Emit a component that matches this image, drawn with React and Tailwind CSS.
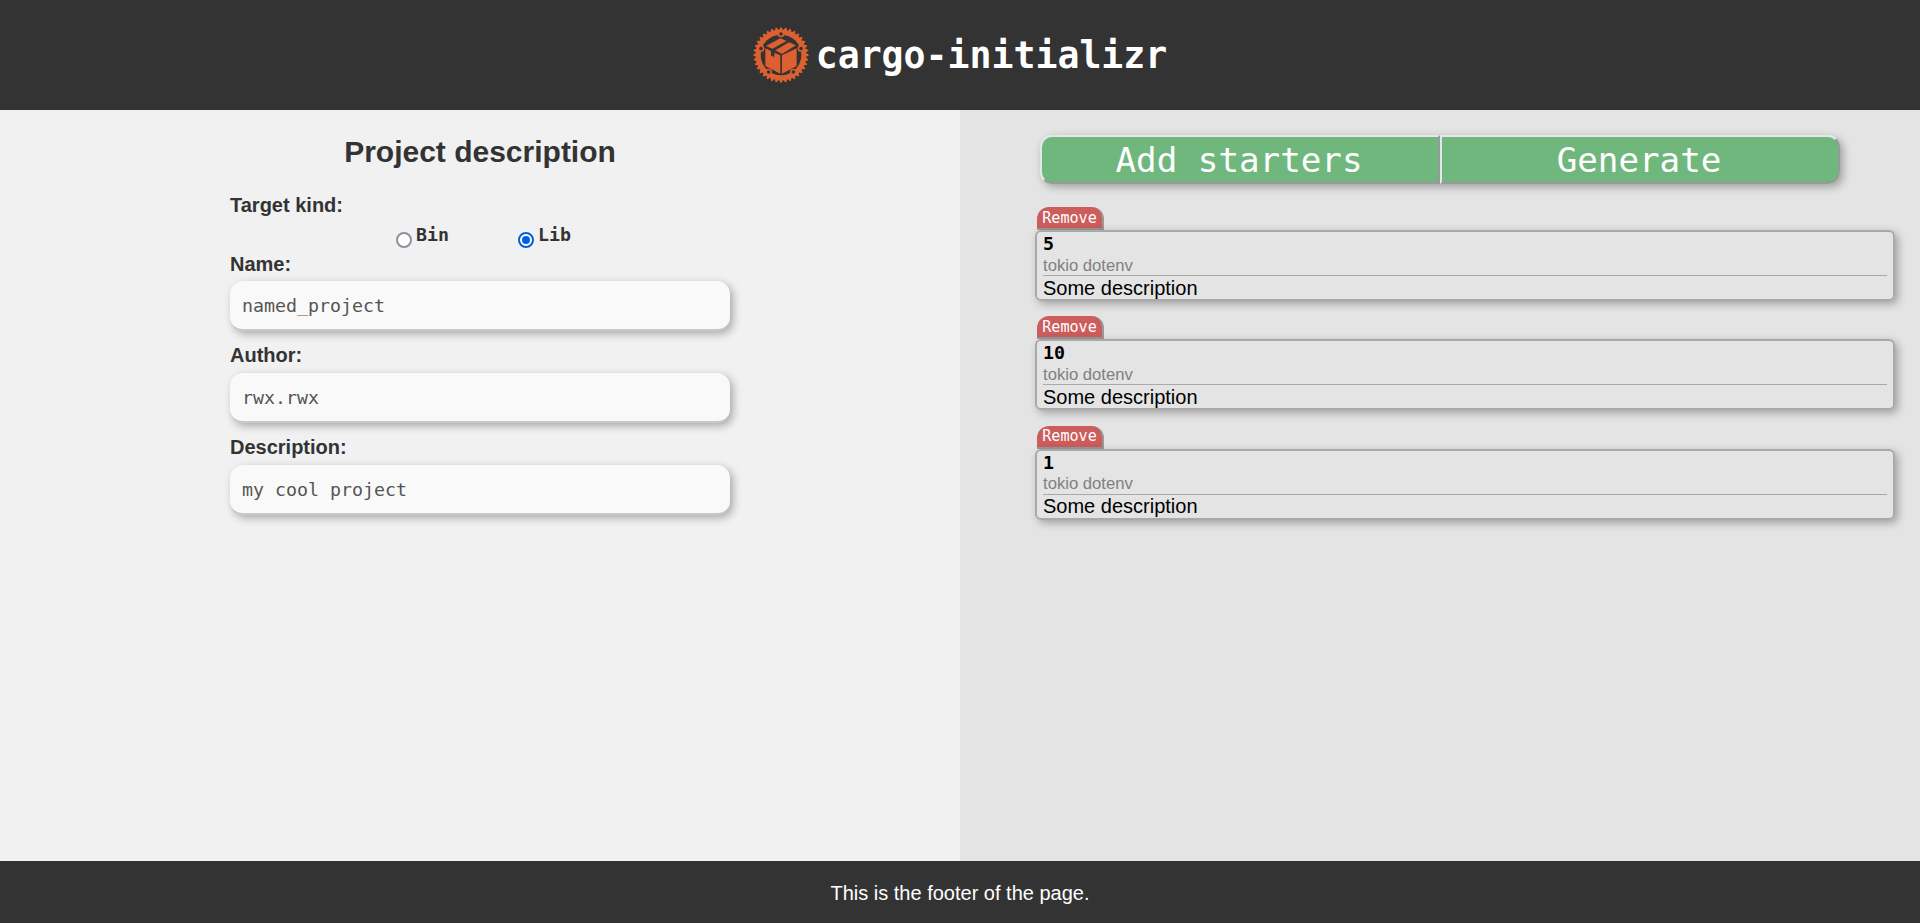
import React from "react";

const mono = "font-['DejaVu_Sans_Mono',monospace]";

const polar = (r, deg) => {
  const a = (deg * Math.PI) / 180;
  return `${(84 + r * Math.sin(a)).toFixed(2)} ${(84 - r * Math.cos(a)).toFixed(2)}`;
};

const TEETH = 36;
const gear = Array.from({ length: TEETH }, (_, i) => {
  const s = 360 / TEETH;
  const c = i * s;
  return [polar(76, c - s * 0.4), polar(83, c - s * 0.12), polar(83, c + s * 0.12), polar(76, c + s * 0.4)].join(" L");
}).join(" L");

function CargoLogo() {
  const bolts = [0, 72, 144, 216, 288];
  return (
    <svg className="size-14 shrink-0" viewBox="0 0 168 168">
      <path d={`M${gear} Z`} fill="#dd6031" />
      <circle cx="84" cy="84" r="61" fill="#333" />
      {bolts.map((b) => {
        const [x, y] = polar(63, b).split(" ");
        return (
          <g key={b}>
            <circle cx={x} cy={y} r="10" fill="#dd6031" />
            <circle cx={x} cy={y} r="5.5" fill="#333" />
          </g>
        );
      })}
      <path
        d="M82 34 L101 42 L58 65 L39 57 Z M108 46 L129 55 L87 81 L67 70 Z M37 64 L54 72 V89 L59 85 L64 93 V77 L82 85 V140 L37 117 Z M131 64 V117 L87 140 V85 Z"
        fill="#dd6031"
      />
    </svg>
  );
}

function Radio({ label, checked }) {
  return (
    <label className="flex h-6 items-start">
      <span
        className={
          "mt-[9px] flex size-4 items-center justify-center rounded-full border-2 bg-white " +
          (checked ? "border-[#0060df]" : "border-[#8f8f9d]")
        }
      >
        {checked && <span className="size-2 rounded-full bg-[#0060df]" />}
      </span>
      <span className={`ml-1 text-[18.27px] leading-6 font-bold ${mono}`}>{label}</span>
    </label>
  );
}

function Field({ label, value }) {
  return (
    <div className="flex h-[91.8px] flex-col">
      <label className="h-[28.4px] text-[20px] leading-[23px] font-bold">{label}</label>
      <input
        className={`h-[50px] w-[500px] rounded-[13px] border-b-2 border-b-[#c8c8c8] bg-[#f9f9f9] pt-px pl-[12px] text-[18.27px] text-[#555] shadow-[3px_3px_8px_rgba(0,0,0,0.3)] outline-none ${mono}`}
        defaultValue={value}
        spellCheck={false}
      />
    </div>
  );
}

function Starter({ name }) {
  return (
    <div className="flex h-[109.33px] flex-col items-start">
      <button
        className={`ml-0.5 h-[23px] w-[67px] rounded-t-[12px] border-r-2 border-b-2 border-[#999] bg-[#cd5c5c] text-[15.1px] leading-[20px] text-white ${mono}`}
      >
        Remove
      </button>
      <div className="h-[71px] w-[860px] rounded-[6px] border-2 border-[#a9a9a9] px-1.5 text-black shadow-[3px_3px_8px_rgba(0,0,0,0.3)]">
        <div className={`h-[22px] text-[18.27px] leading-[23px] font-bold ${mono}`}>{name}</div>
        <div className="h-[22px] border-b border-[#a9a9a9] pt-[0.7px] text-[16.67px] leading-[22px] text-[#808080]">tokio dotenv</div>
        <div className="pt-[0.7px] text-[20px] leading-[23px]">Some description</div>
      </div>
    </div>
  );
}

export default function App() {
  const action =
    "h-[49px] w-[400px] border-2 border-t-[#e6e6e6] border-l-[#e6e6e6] border-r-[#999] border-b-[#999] bg-[#70b77e] pt-0.5 pr-0.5 text-[34.2px] leading-[43px] text-white " +
    mono;
  return (
    <div className="flex h-[923px] w-[1920px] flex-col overflow-hidden font-['Liberation_Sans',Arial,sans-serif] text-[#333]">
      <header className="flex h-[110px] items-center justify-center bg-[#333]">
        <CargoLogo />
        <h1 className={`mt-0.5 ml-[7px] text-[36.5px] leading-[48px] font-bold text-white ${mono}`}>cargo-initializr</h1>
      </header>
      <main className="flex h-[751px]">
        <section className="w-1/2 bg-[#f1f1f1] px-[230px]">
          <h2 className="mt-[25px] h-[34px] text-center text-[30px] leading-[34px] font-bold">Project description</h2>
          <div className="mt-[25px] h-[23px] text-[20px] leading-[23px] font-bold">Target kind:</div>
          <div className="mt-[6px] flex h-[29.6px] gap-[69px] pl-[166px]">
            <Radio label="Bin" />
            <Radio label="Lib" checked />
          </div>
          <Field label="Name:" value="named_project" />
          <Field label="Author:" value="rwx.rwx" />
          <Field label="Description:" value="my cool project" />
        </section>
        <section className="w-1/2 bg-[#e4e4e4] pt-[25px]">
          <div className="ml-20 flex w-[800px] rounded-[12px] shadow-[3px_3px_8px_rgba(0,0,0,0.3)]">
            <button className={`rounded-l-[12px] ${action}`}>Add starters</button>
            <button className={`rounded-r-[12px] ${action}`}>Generate</button>
          </div>
          <div className="mt-[23px] ml-[75px]">
            <Starter name="5" />
            <Starter name="10" />
            <Starter name="1" />
          </div>
        </section>
      </main>
      <footer className="flex h-[62px] items-center justify-center bg-[#333] pt-0.5 text-[20px] leading-6 text-white">
        This is the footer of the page.
      </footer>
    </div>
  );
}
